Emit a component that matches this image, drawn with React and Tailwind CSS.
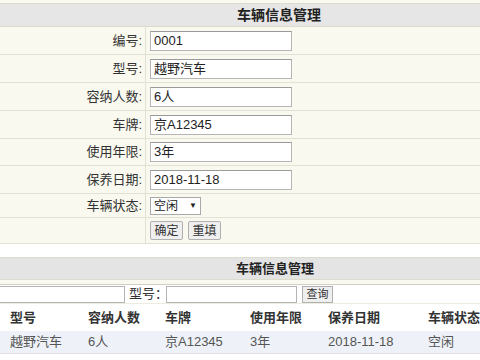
import React from "react";

const font = { fontFamily: '"Liberation Sans", "Noto Sans CJK SC", sans-serif' };

function Row({ label, children, h = "h-[28px]" }) {
  return (
    <div className={`flex ${h} border-b border-[#e2e2d4]`}>
      <div className="w-[146px] shrink-0 border-r border-[#e2e2d4] flex items-center justify-end pr-[3px] text-[13px] text-[#333]">
        {label}
      </div>
      <div className="flex items-center pl-[4px]">{children}</div>
    </div>
  );
}

function Input({ value }) {
  return (
    <div className="w-[142px] h-[20px] bg-white border border-[#b5b5b5] border-t-[#9a9a9a] flex items-center pl-[3px] text-[13px] text-[#222]">
      {value}
    </div>
  );
}

function Btn({ children, w = "w-[33px]" }) {
  return (
    <div className={`${w} h-[19px] bg-[#efefef] border border-[#b0b0b0] rounded-[2px] flex items-center justify-center text-[12px] text-[#333]`}>
      {children}
    </div>
  );
}

export default function App() {
  const cols = [
    { w: "w-[88px]", pl: "pl-[10px]" },
    { w: "w-[77px]", pl: "" },
    { w: "w-[85px]", pl: "" },
    { w: "w-[78px]", pl: "" },
    { w: "w-[100px]", pl: "" },
    { w: "flex-1", pl: "" },
  ];
  const head = ["型号", "容纳人数", "车牌", "使用年限", "保养日期", "车辆状态"];
  const data = ["越野汽车", "6人", "京A12345", "3年", "2018-11-18", "空闲"];
  return (
    <div className="w-[480px] h-[360px] bg-white overflow-hidden" style={font}>
      <div className="bg-[#f9f9ef]">
        <div className="h-[4px] border-b border-[#dcdccc]" />
        <div className="h-[23px] bg-[#e6e6e6] border-b border-[#dcdccc] flex items-center justify-center pl-[78px] text-[14px] font-bold text-[#222]">
          车辆信息管理
        </div>
        <Row label="编号:"><Input value="0001" /></Row>
        <Row label="型号:"><Input value="越野汽车" /></Row>
        <Row label="容纳人数:"><Input value="6人" /></Row>
        <Row label="车牌:"><Input value="京A12345" /></Row>
        <Row label="使用年限:" h="h-[27px]"><Input value="3年" /></Row>
        <Row label="保养日期:"><Input value="2018-11-18" /></Row>
        <Row label="车辆状态:" h="h-[24px]">
          <div className="w-[51px] h-[18px] bg-white border border-[#a9a9a9] flex items-center justify-between px-[3px] text-[12px] text-[#222] mt-[1px]">
            <span>空闲</span>
            <span className="text-[8px] leading-none">▼</span>
          </div>
        </Row>
        <Row label="" h="h-[26px]">
          <div className="flex gap-[5px]">
            <Btn>确定</Btn>
            <Btn>重填</Btn>
          </div>
        </Row>
      </div>
      <div className="h-[13px] bg-white" />
      <div className="bg-[#f9f9ef] border-t border-[#dcdccc]">
        <div className="h-[22px] bg-[#e4e4e4] border-b border-[#dcdccc] flex items-center justify-center pl-[70px] text-[13px] font-bold text-[#222]">
          车辆信息管理
        </div>
        <div className="h-[5px] border-b border-[#cfcfc4]" />
      </div>
      <div className="h-[19px] bg-white border-b border-[#ececdf] flex items-center">
        <div className="w-[127px] h-[17px] bg-white border border-[#b5b5b5] -ml-[2px]" />
        <span className="ml-[4px] text-[13px] text-[#333]">型号：</span>
        <div className="w-[131px] h-[17px] bg-white border border-[#b5b5b5] ml-[-2px]" />
        <div className="ml-[5px] w-[31px] h-[17px] bg-[#efefef] border border-[#b0b0b0] flex items-center justify-center text-[11px] text-[#333]">
          查询
        </div>
      </div>
      <div className="flex h-[27px] items-center bg-white text-[13px] font-bold text-[#333]">
        {head.map((t, i) => (
          <div key={i} className={`${cols[i].w} ${cols[i].pl} shrink-0`}>{t}</div>
        ))}
      </div>
      <div className="flex h-[23px] items-center bg-[#eef2f8] text-[13px] text-[#555] border-b border-[#e2e2e2]">
        {data.map((t, i) => (
          <div key={i} className={`${cols[i].w} ${cols[i].pl} shrink-0`}>{t}</div>
        ))}
      </div>
    </div>
  );
}
